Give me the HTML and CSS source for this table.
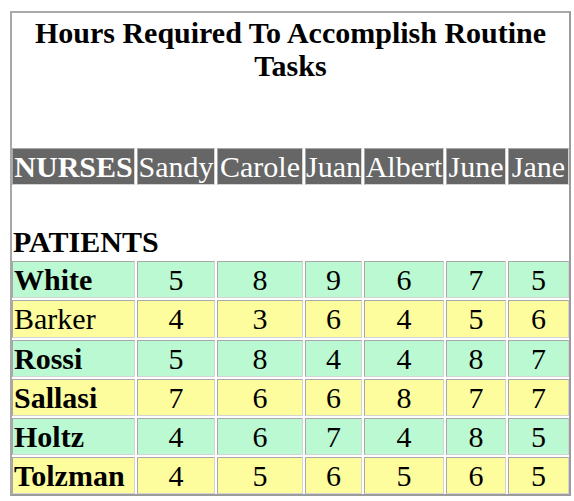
FILE: index.html
```html
<!DOCTYPE html>
<html>
<head>
<meta charset="utf-8">
<link rel="stylesheet" href="styles.css">
</head>
<body>
<div class="frame">
<table class="hours">
  <tr>
    <th class="title" colspan="7">Hours Required To Accomplish Routine Tasks</th>
  </tr>
  <tr class="nurses">
    <th class="label c1">NURSES</th>
    <th class="c2">Sandy</th>
    <th class="c3">Carole</th>
    <th class="c4">Juan</th>
    <th class="c5">Albert</th>
    <th class="c6">June</th>
    <th class="c7">Jane</th>
  </tr>
  <tr>
    <td class="patients" colspan="7">PATIENTS</td>
  </tr>
  <tr class="green">
    <td class="name bold">White</td><td>5</td><td>8</td><td>9</td><td>6</td><td>7</td><td>5</td>
  </tr>
  <tr class="yellow">
    <td class="name">Barker</td><td>4</td><td>3</td><td>6</td><td>4</td><td>5</td><td>6</td>
  </tr>
  <tr class="green">
    <td class="name bold">Rossi</td><td>5</td><td>8</td><td>4</td><td>4</td><td>8</td><td>7</td>
  </tr>
  <tr class="yellow">
    <td class="name bold">Sallasi</td><td>7</td><td>6</td><td>6</td><td>8</td><td>7</td><td>7</td>
  </tr>
  <tr class="green">
    <td class="name bold">Holtz</td><td>4</td><td>6</td><td>7</td><td>4</td><td>8</td><td>5</td>
  </tr>
  <tr class="yellow">
    <td class="name bold">Tolzman</td><td>4</td><td>5</td><td>6</td><td>5</td><td>6</td><td>5</td>
  </tr>
</table>
</div>
</body>
</html>
```
FILE: styles.css
```css
html, body {
  margin: 0;
  padding: 0;
  background: #ffffff;
}

body {
  padding: 11px 0 0 10px;
  font-family: "Liberation Serif", "Times New Roman", serif;
  font-size: 30px;
  color: #000000;
}

.frame {
  box-sizing: border-box;
  width: 561px;
  border: 2px solid #a8a8a8;
  border-right-color: #9c9c9c;
  border-bottom-color: #9c9c9c;
  overflow: hidden;
}

.hours {
  width: 561px;
  margin: -2px;
  border-collapse: separate;
  border-spacing: 2px;
}

.hours th,
.hours td {
  padding: 1px;
  border: 1px solid #a8a8a8;
  border-right-color: #d4d4d4;
  border-bottom-color: #d4d4d4;
  text-align: center;
  vertical-align: middle;
  font-weight: normal;
  line-height: 33.2px;
}

.hours .title {
  border: none;
  height: 130px;
  padding: 3px 10px 0;
  vertical-align: top;
  font-weight: bold;
}

.nurses th {
  background: #666666;
  color: #ffffff;
  padding: 1px 0;
  white-space: nowrap;
}

.nurses .label {
  font-weight: bold;
}

.nurses .c1 { width: 121px; }
.nurses .c2 { width: 76px; }
.nurses .c3 { width: 84px; }
.nurses .c4 { width: 55px; }
.nurses .c5 { width: 78px; }
.nurses .c6 { width: 58px; }
.nurses .c7 { width: 59px; }

.hours .patients {
  border: none;
  height: 70px;
  vertical-align: bottom;
  text-align: left;
  font-weight: bold;
}

.green td {
  background: #bbf9d2;
}

.yellow td {
  background: #fdfd9e;
}

.hours .name {
  text-align: left;
}

.hours .bold {
  font-weight: bold;
}
```
